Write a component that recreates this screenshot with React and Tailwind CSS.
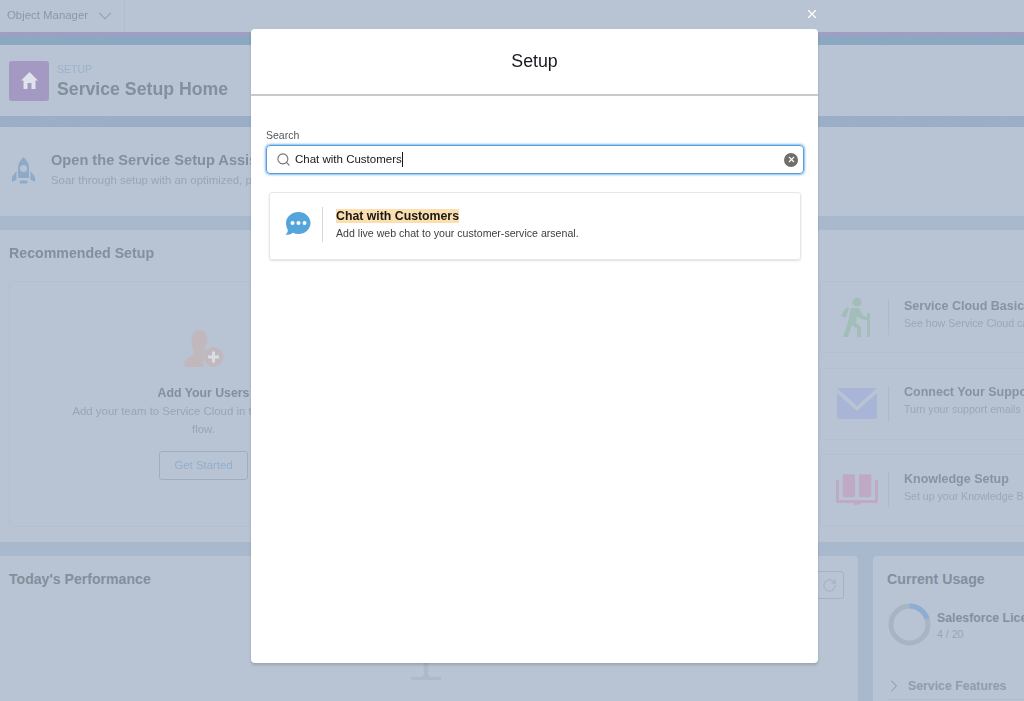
import React from "react";
import { Search, X, ChevronDown, ChevronRight, RotateCw } from "lucide-react";

function Texture() {
  return (
    <svg className="absolute inset-0 w-full h-full" preserveAspectRatio="none" viewBox="0 0 1024 20" fill="none" stroke="#ffffff" strokeOpacity="0.09" strokeWidth="0.5">
      <path d="M0 18C8 6 12 16 20 2M12 20C20 4 30 12 36 0M30 20C40 2 60 0 70 20M85 20C95 6 100 10 110 0M830 20L840 0M850 20L856 0M880 20C900 0 910 4 920 20M930 20L945 0M950 20L965 0M990 20C1000 2 1010 2 1020 20" />
    </svg>
  );
}

function RightCard({ icon, title, sub }) {
  return (
    <div className="flex items-center h-[72px] border border-[#b2bfcf] rounded-[3px] bg-[#b8c4d3] overflow-hidden">
      <div className="w-[68px] h-[36px] pl-[4px] flex items-center justify-center shrink-0 border-r border-[#adbaca]">{icon}</div>
      <div className="pl-[15px] pb-[5px] whitespace-nowrap">
        <div className="text-[12.5px] font-bold text-[#8793a2] leading-[17px]">{title}</div>
        <div className="text-[10.6px] text-[#9aa7b6] leading-[17px]">{sub}</div>
      </div>
    </div>
  );
}

export default function App() {
  return (
    <div className="relative h-[701px] w-[1024px] overflow-hidden bg-[#b8c4d3] font-['Liberation_Sans',Arial,sans-serif]">
      <div className="flex flex-col h-full blur-[0.6px]">
        {/* top nav */}
        <div className="h-[32px] flex shrink-0">
          <div className="w-[125px] flex items-center pl-[7px] gap-[6px] border-r border-[#b1bece] text-[11.4px] text-[#8a97a6]">
            <span>Object Manager</span>
            <ChevronDown size={22} strokeWidth={1.1} className="text-[#8a97a6]" />
          </div>
        </div>
        <div className="h-[3px] bg-[#a59cc4] shrink-0" />
        <div className="relative h-[10px] bg-[#8ba7c1] shrink-0 overflow-hidden"><Texture /></div>

        {/* page header */}
        <div className="h-[71px] flex items-center pl-[9px] gap-[8px] shrink-0">
          <div className="w-[40px] h-[40px] rounded-[3px] bg-[#a499c3] flex items-center justify-center">
            <svg width="17" height="17" viewBox="0 0 17 17" fill="#dfe3ec">
              <path d="M8.500 0L0 8.500h2.500V17h4v-6h4v6h4V8.500H17z" />
            </svg>
          </div>
          <div className="pt-[2px]">
            <div className="text-[10.5px] leading-[12px] text-[#9ab2c9]">SETUP</div>
            <div className="text-[17.7px] leading-[24px] mt-[2px] font-bold text-[#838f9e]">Service Setup Home</div>
          </div>
        </div>
        <div className="relative h-[11px] bg-[#9aafc7] shrink-0 overflow-hidden"><Texture /></div>

        {/* assistant */}
        <div className="h-[89px] flex items-center pl-[12px] gap-[16px] shrink-0">
          <svg width="23" height="30" viewBox="0 0 23 30" fill="#8daac8">
            <path d="M11.500 0C8 3 6 7 6 11v10h11V11c0-4-2-8-5.500-11zm0 8a3.500 3.500 0 1 1 0 7 3.500 3.500 0 0 1 0-7z" fillRule="evenodd" />
            <path d="M4.500 14L0 20v5l4.500-2.500zM18.500 14l4.500 6v5l-4.500-2.500z" />
            <rect x="7.500" y="23.500" width="8" height="3" rx="1.500" />
          </svg>
          <div className="whitespace-nowrap pb-[4px]">
            <div className="text-[14.6px] leading-[18px] font-bold text-[#838f9e]">Open the Service Setup Assistant</div>
            <div className="text-[11.4px] leading-[17px] text-[#98a5b4] mt-[3px]">Soar through setup with an optimized, personalized flow</div>
          </div>
        </div>
        <div className="h-[14px] bg-[#a8b9cd] shrink-0" />

        {/* recommended */}
        <div className="h-[312px] px-[9px] shrink-0 flex flex-col">
          <div className="h-[51px] flex items-center pb-[4px] text-[14.2px] font-bold text-[#838f9e]">Recommended Setup</div>
          <div className="flex">
            <div className="w-[389px] h-[246px] border border-[#b2bfcf] rounded-[3px] flex flex-col items-center pt-[48px] text-center">
              <svg width="40" height="38" viewBox="0 0 40 38">
                <path d="M15.500 0c4.500 0 8 3.700 8 8.500 0 3.500-1.300 6-2.800 8.300-1 1.700-.2 3 1.800 4C19 24 18 31 20.500 37H3c-2 0-3-1-3-2.500 0-3 3-6.500 6.500-8 3-1.500 3.500-4.500 2.300-7.200C8.300 16.500 7.500 13 7.500 8.500 7.500 3.700 11 0 15.500 0z" fill="#c1b8bd" />
                <circle cx="29.500" cy="27" r="10" fill="#c1b8bd" />
                <path d="M28 21.500h3v4h4v3h-4v4h-3v-4h-4v-3h4z" fill="#d9dde4" />
              </svg>
              <div className="mt-[17px] text-[12.3px] leading-[17px] font-bold text-[#838f9e] w-[100px] whitespace-nowrap flex justify-center">Add Your Users</div>
              <div className="mt-[1px] w-[285px] text-[11.4px] leading-[17.5px] text-[#98a5b4]">Add your team to Service Cloud in this guided setup flow.</div>
              <div className="mt-[13px] w-[89px] h-[29px] rounded-[3px] border border-[#9fadbe] flex items-center justify-center text-[11.4px] text-[#90aecd]">Get Started</div>
            </div>
            <div className="w-[422px]" />
            <div className="flex-1 flex flex-col gap-[14.5px] -mr-[20px] min-w-0">
              <RightCard
                title="Service Cloud Basics"
                sub="See how Service Cloud can help"
                icon={
                  <svg width="33" height="40" viewBox="0 0 33 40" fill="#a3bdb8">
                    <circle cx="17" cy="5" r="4.500" />
                    <path d="M11 11h8l4 8 4 1v-4h3v24h-3V23l-6-1-4-3-1 7 5 4v10h-4v-8l-5-4-4 12H3l5-15zM5 12l3-2 1 1-3 10-5-2z" />
                  </svg>
                }
              />
              <RightCard
                title="Connect Your Support Email"
                sub="Turn your support emails into cases"
                icon={
                  <svg width="40" height="31" viewBox="0 0 40 31">
                    <path d="M0 0h40L20 18z" fill="#a9b5d6" />
                    <path d="M0 5l20 18L40 5v23a3 3 0 0 1-3 3H3a3 3 0 0 1-3-3z" fill="#a9b5d6" />
                  </svg>
                }
              />
              <RightCard
                title="Knowledge Setup"
                sub="Set up your Knowledge Base"
                icon={
                  <svg width="42" height="32" viewBox="0 0 44 33" fill="#bfa9c4">
                    <rect x="7" y="0" width="13" height="24" rx="2" />
                    <rect x="24" y="0" width="13" height="24" rx="2" />
                    <path d="M0 6h3v21h38V6h3v23a1 1 0 0 1-1 1H26l-1 2h-6l-1-2H1a1 1 0 0 1-1-1z" />
                  </svg>
                }
              />
            </div>
          </div>
        </div>
        <div className="h-[14px] bg-[#a8b9cd] shrink-0" />

        {/* bottom */}
        <div className="flex-1 flex gap-[15px] bg-[#a8b9cd] min-h-0">
          <div className="w-[858px] bg-[#b8c4d3] rounded-tr-[4px] pl-[9px] pr-[14px] pt-[15px] flex justify-between items-start">
            <div className="text-[14.1px] leading-[16px] font-bold text-[#838f9e]">Today's Performance</div>
            <div className="w-[30px] h-[28px] border border-[#a5b2c3] rounded-[3px] flex items-center justify-center">
              <RotateCw size={15} strokeWidth={1.2} className="text-[#97a5b5]" />
            </div>
          </div>
          <div className="flex-1 bg-[#b8c4d3] rounded-tl-[4px] pl-[14px] pt-[15px] overflow-hidden whitespace-nowrap">
            <div className="text-[14.2px] leading-[16px] font-bold text-[#838f9e]">Current Usage</div>
            <div className="flex items-center gap-[6px] mt-[16px] pl-[1px]">
              <svg className="shrink-0" width="43" height="43" viewBox="0 0 43 43" fill="none" strokeWidth="5">
                <circle cx="21.5" cy="21.5" r="18.5" stroke="#a9b4c3" />
                <path d="M21.5 3A18.500 18.500 0 0 1 39.100 15.800" stroke="#8daed2" />
              </svg>
              <div className="mt-[2px]">
                <div className="text-[12.3px] leading-[16px] font-bold text-[#838f9e]">Salesforce Licenses</div>
                <div className="text-[10.6px] leading-[16px] text-[#98a5b4]">4 / 20</div>
              </div>
            </div>
            <div className="flex items-center gap-[4px] mt-[31px] h-[18px] -ml-[3px]">
              <ChevronRight size={20} strokeWidth={1.2} className="text-[#8794a3]" />
              <span className="text-[12.3px] font-bold text-[#8f9cab]">Service Features</span>
            </div>
            <div className="mt-[4px] h-px bg-[#adbaca]" />
          </div>
        </div>
      </div>

      {/* stand behind the modal */}
      <svg className="absolute left-[408px] top-[660px] blur-[0.6px]" width="36" height="22" viewBox="0 0 36 22" fill="#adbaca">
        <path d="M15 0h6l-1 14 2 3h-8l2-3z" />
        <path d="M3 17h30v3H3z" />
      </svg>

      {/* close */}
      <button className="absolute left-[805px] top-[7px] w-[14px] h-[14px] flex items-center justify-center text-white">
        <X size={14} strokeWidth={2} />
      </button>

      {/* modal */}
      <div className="absolute left-[251px] top-[29px] w-[567px] h-[634px] bg-white rounded-[4px] shadow-[0_2px_3px_rgba(0,0,0,0.16)] flex flex-col">
        <div className="h-[67px] shrink-0 border-b-2 border-[#c9c9c9] flex items-center justify-center text-[17.8px] text-[#16191f]">Setup</div>
        <div className="pt-[33px] pl-[15px] pr-[14px]">
          <div className="text-[10.5px] leading-[13px] text-[#54565a] mb-[3px]">Search</div>
          <div className="h-[29px] rounded-[4px] border border-[#5a9ce0] shadow-[0_0_3px_#0176d3] flex items-center pl-[9px] pr-[5px] gap-[4px] text-[11.5px] text-[#181818]">
            <Search size={15} strokeWidth={1.7} className="text-[#706e6b] shrink-0" />
            <span className="border-r border-[#181818] leading-[15px]">Chat with Customers</span>
            <span className="ml-auto w-[14px] h-[14px] rounded-full bg-[#706e6b] flex items-center justify-center">
              <X size={9} strokeWidth={3} className="text-white" />
            </span>
          </div>
          <div className="mt-[18px] mx-[3px] h-[68px] pb-[4px] rounded-[3px] border border-[#e7e7e7] shadow-[0_1px_2px_rgba(0,0,0,0.12)] flex items-center">
            <div className="w-[53px] h-[35px] pl-[3px] shrink-0 flex items-center justify-center border-r border-[#d6d6d6]">
              <svg width="26" height="24" viewBox="0 0 26 24" fill="#54a5dc">
                <path d="M13.500 0C20 0 25.500 4.800 25.500 11S20 22 13.500 22c-2 0-3.800-.4-5.400-1.200C6 22.500 3 23 .5 23c1.300-1.200 2.200-2.800 2.400-5C1.700 16 1 13.600 1 11 1 4.800 7 0 13.500 0z" />
                <circle cx="7.5" cy="11" r="2" fill="#fff" />
                <circle cx="13.5" cy="11" r="2" fill="#fff" />
                <circle cx="19.5" cy="11" r="2" fill="#fff" />
              </svg>
            </div>
            <div className="pl-[13px]">
              <div className="text-[12.3px] leading-[17px] font-bold text-[#181818]"><span className="bg-[#fbdfae]">Chat with Customers</span></div>
              <div className="text-[10.6px] leading-[16px] text-[#3e3e3c]">Add live web chat to your customer-service arsenal.</div>
            </div>
          </div>
        </div>
      </div>
    </div>
  );
}
